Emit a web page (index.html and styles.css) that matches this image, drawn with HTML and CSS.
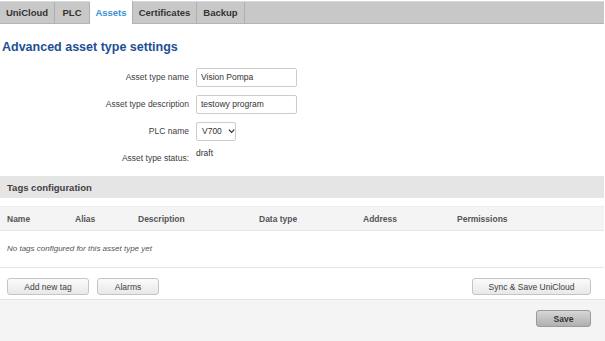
FILE: index.html
```html
<!DOCTYPE html>
<html lang="en">
<head>
    <meta charset="UTF-8">
    <title>Advanced asset type settings</title>
    <link rel="stylesheet" href="styles.css">
</head>
<body>
    <div class="tabs">
        <a class="tab" style="width:55px">UniCloud</a>
        <a class="tab" style="width:35px">PLC</a>
        <a class="tab active" style="width:43px">Assets</a>
        <a class="tab" style="width:64px">Certificates</a>
        <a class="tab" style="width:48px">Backup</a>
    </div>

    <h2 class="title">Advanced asset type settings</h2>

    <div class="form">
        <div class="row">
            <label>Asset type name</label>
            <input type="text" class="text" value="Vision Pompa">
        </div>
        <div class="row">
            <label>Asset type description</label>
            <input type="text" class="text" value="testowy program">
        </div>
        <div class="row">
            <label>PLC name</label>
            <div class="select">V700 <svg width="8" height="6" viewBox="0 0 8 6"><path d="M1 1.5 L4 4.5 L7 1.5" fill="none" stroke="#333" stroke-width="1.4"/></svg></div>
        </div>
        <div class="row status">
            <label>Asset type status:</label>
            <span class="value">draft</span>
        </div>
    </div>

    <div class="section">Tags configuration</div>

    <div class="thead">
        <span style="width:68px">Name</span>
        <span style="width:63px">Alias</span>
        <span style="width:121px">Description</span>
        <span style="width:104px">Data type</span>
        <span style="width:94px">Address</span>
        <span>Permissions</span>
    </div>
    <div class="empty">No tags configured for this asset type yet</div>

    <div class="actions">
        <button class="btn" style="width:82px">Add new tag</button>
        <button class="btn" style="width:62px">Alarms</button>
        <button class="btn sync">Sync &amp; Save UniCloud</button>
    </div>

    <div class="footer">
        <button class="btn save">Save</button>
    </div>
</body>
</html>
```

FILE: styles.css
```css
body {
    margin: 0;
    font-family: 'Liberation Sans', Arial, sans-serif;
    font-size: 8.5px;
    color: #404040;
    background: #fff;
    width: 605px;
}
.tabs {
    display: flex;
    margin-top: 1px;
    width: 604px;
    height: 21px;
    background: #c8c8c8;
    border-top: 1px solid #d8d8d8;
    border-bottom: 1px solid #b4b4b4;
}
.tab {
    box-sizing: border-box;
    display: flex;
    align-items: center;
    justify-content: center;
    font-weight: bold;
    font-size: 9.5px;
    color: #333;
    border-right: 1px solid #b0b0b0;
}
.tab.active {
    background: #fff;
    color: #3b8fd6;
    height: 23px;
    margin-top: -1px;
}
.title {
    margin: 16px 0 0 2px;
    font-size: 12.5px;
    color: #1d4f95;
    font-weight: bold;
}
.form {
    margin-top: 14px;
}
.row {
    display: flex;
    align-items: center;
    height: 18px;
    margin-bottom: 9px;
}
.row label {
    width: 189px;
    text-align: right;
    padding-right: 7px;
    color: #404040;
}
.text {
    box-sizing: border-box;
    width: 101px;
    height: 19px;
    border: 1px solid #ccc;
    border-radius: 2px;
    padding: 0 4px;
    font-family: 'Liberation Sans', Arial, sans-serif;
    font-size: 8.5px;
    color: #333;
}
.select {
    box-sizing: border-box;
    width: 40px;
    height: 19px;
    border: 1px solid #ccc;
    border-radius: 2px;
    display: flex;
    align-items: center;
    gap: 6px;
    padding-left: 5px;
    color: #333;
}
.row.status {
    align-items: flex-start;
    height: 14px;
    margin-top: -1px;
}
.row.status label {
    padding-top: 5px;
}
.status .value {
    color: #333;
}
.section {
    margin-top: 14px;
    height: 22px;
    width: 604px;
    background: #e5e5e5;
    display: flex;
    align-items: center;
    padding-left: 7px;
    box-sizing: border-box;
    font-weight: bold;
    font-size: 9.5px;
    color: #404040;
}
.thead {
    margin-top: 8px;
    width: 597px;
    height: 23px;
    background: #f4f4f4;
    border-top: 1px solid #ececec;
    border-bottom: 1px solid #e6e6e6;
    display: flex;
    align-items: center;
    padding-left: 7px;
    font-weight: bold;
    font-size: 8.5px;
    color: #555;
}
.empty {
    height: 37px;
    padding: 13px 0 0 7px;
    box-sizing: border-box;
    font-style: italic;
    font-size: 8px;
    color: #555;
    border-bottom: 1px solid #e4e4e4;
    width: 604px;
}
.actions {
    display: flex;
    gap: 8px;
    padding: 10px 14px 0 7px;
    height: 32px;
    box-sizing: border-box;
    width: 605px;
    border-bottom: 1px solid #e6e6e6;
}
.btn {
    height: 17px;
    border: 1px solid #c4c4c4;
    border-radius: 3px;
    background: linear-gradient(#fbfbfb, #e8e8e8);
    font-family: 'Liberation Sans', Arial, sans-serif;
    font-size: 8.5px;
    color: #404040;
    padding: 0;
}
.btn.sync {
    margin-left: auto;
    width: 119px;
}
.footer {
    background: #f4f4f4;
    height: 41px;
    width: 605px;
    display: flex;
    justify-content: flex-end;
    padding: 10px 14px 0 0;
    box-sizing: border-box;
}
.btn.save {
    width: 55px;
    background: linear-gradient(#d6d6d6, #b0b0b0);
    border-color: #9a9a9a;
    font-weight: bold;
    color: #333;
}
```
